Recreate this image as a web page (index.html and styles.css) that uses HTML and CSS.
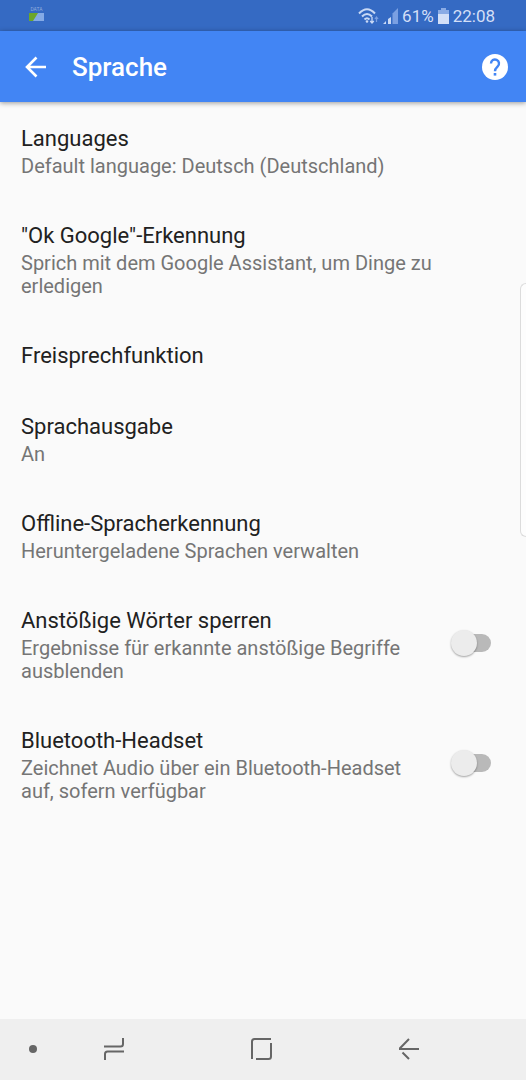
FILE: index.html
```
<!DOCTYPE html>
<html lang="de">
<head>
  <meta charset="UTF-8" />
  <meta name="viewport" content="width=device-width, initial-scale=1.0" />
  <title>Sprache</title>
  <link rel="stylesheet" href="styles.css">
</head>
<body>

  <div class="status-bar">
    <div class="data-badge">
      <span>DATA</span>
      <svg width="15" height="8" viewBox="0 0 15 8">
        <rect width="15" height="8" fill="#84aae6" />
        <path d="M0 0h9L4 8H0z" fill="#6ca62c" />
      </svg>
    </div>
    <div class="status-info">
      <svg width="21" height="18" viewBox="0 0 21 18" fill="none" stroke="#c9d9f5" stroke-width="2">
        <path d="M1 6.500Q9 -2 17 6.500M4 9.500Q9 4.500 14 9.500M6.500 12.500Q9 10 11.500 12.500" />
        <circle cx="9" cy="14.500" r="1.300" fill="#c9d9f5" stroke="none" />
        <path d="M14 10v6M12.200 14l1.800 2 1.800-2" stroke-width="1.300" />
        <path d="M18.500 15V10M16.900 12l1.600-2 1.600 2" stroke="#7ba0e2" stroke-width="1.200" />
      </svg>
      <svg width="15" height="16" viewBox="0 0 15 16">
        <path d="M0 16l3-3v3zM5 11l3-2v7H5z" fill="#c9d9f5" />
        <path d="M9.500 5.500L15 0v16H9.500z" fill="#7ba0e2" />
      </svg>
      <span>61%</span>
      <svg width="11" height="16" viewBox="0 0 11 16">
        <path d="M3 0h5v2h3v4H0V2h3z" fill="#8aabe5" />
        <path d="M0 6h11v10H0z" fill="#d3dff7" />
      </svg>
      <span>22:08</span>
    </div>
  </div>

  <header class="toolbar">
    <button type="button" aria-label="Zurück">
      <svg width="22" height="22" viewBox="0 0 22 22" fill="none" stroke="#fff" stroke-width="2.600">
        <path d="M21 11H2.500M11.500 1.500L2 11l9.500 9.500" />
      </svg>
    </button>
    <h1>Sprache</h1>
    <button type="button" aria-label="Hilfe">
      <svg width="26" height="26" viewBox="0 0 26 26">
        <circle cx="13" cy="13" r="13" fill="#fff" />
        <path d="M9 9.500a4 4 0 1 1 6.700 2.900C14.200 13.800 13 14.600 13 17.200" fill="none" stroke="#4285f4" stroke-width="2.400" />
        <rect x="11.700" y="19" width="2.600" height="2.600" fill="#4285f4" />
      </svg>
    </button>
  </header>

  <main class="settings">
    <a class="setting" href="#languages">
      <span class="title">Languages</span>
      <span class="desc">Default language: Deutsch (Deutschland)</span>
    </a>
    <a class="setting" href="#ok-google">
      <span class="title">"Ok Google"-Erkennung</span>
      <span class="desc">Sprich mit dem Google Assistant, um Dinge zu erledigen</span>
    </a>
    <a class="setting" href="#freisprechen">
      <span class="title">Freisprechfunktion</span>
    </a>
    <a class="setting" href="#sprachausgabe">
      <span class="title">Sprachausgabe</span>
      <span class="desc">An</span>
    </a>
    <a class="setting" href="#offline">
      <span class="title">Offline-Spracherkennung</span>
      <span class="desc">Heruntergeladene Sprachen verwalten</span>
    </a>
    <label class="setting with-switch" for="block-words">
      <span class="text">
        <span class="title">Anstößige Wörter sperren</span>
        <span class="desc">Ergebnisse für erkannte anstößige Begriffe ausblenden</span>
      </span>
      <input class="switch" type="checkbox" id="block-words" />
    </label>
    <label class="setting with-switch" for="bluetooth">
      <span class="text">
        <span class="title">Bluetooth-Headset</span>
        <span class="desc">Zeichnet Audio über ein Bluetooth-Headset auf, sofern verfügbar</span>
      </span>
      <input class="switch" type="checkbox" id="bluetooth" />
    </label>
  </main>

  <!-- Edge panel handle -->
  <div class="edge-handle"></div>

  <nav class="nav-bar">
    <button type="button" aria-label="Leiste ausblenden">
      <svg width="8" height="8" viewBox="0 0 8 8"><circle cx="4" cy="4" r="4" fill="#666" /></svg>
    </button>
    <div class="nav-keys">
      <button type="button" aria-label="Letzte Apps">
        <svg width="20" height="24" viewBox="0 0 20 24">
          <path d="M0 9.500h16.500q2.500 0 2.500-2.500V1M20 14.500H3.500Q1 14.500 1 17V23" />
        </svg>
      </button>
      <button type="button" aria-label="Startseite">
        <svg width="21" height="22" viewBox="0 0 21 22">
          <path d="M1 21V3.500Q1 1 3.500 1H20M20 5v13.500q0 2.500-2.500 2.500H5" />
        </svg>
      </button>
      <button type="button" aria-label="Zurück">
        <svg width="20" height="22" viewBox="0 0 20 22">
          <path d="M10 1L1 10.200V11H20M3.500 14.500L10 21" />
        </svg>
      </button>
    </div>
  </nav>

</body>
</html>
```
FILE: styles.css
```
* {
  margin: 0;
  padding: 0;
  box-sizing: border-box;
  font-family: Roboto, sans-serif;
}

body {
  min-height: 100vh;
  display: flex;
  flex-direction: column;
  background-color: #fafafa;
  color: #212121;
}

button {
  background: transparent;
  border: none;
  cursor: pointer;
}

svg {
  display: block;
}

.status-bar {
  height: 31px;
  padding: 0 31px 0 29px;
  display: flex;
  align-items: center;
  justify-content: space-between;
  background-color: #356ac3;
}

.data-badge {
  display: flex;
  flex-direction: column;
  align-items: center;
  margin-bottom: 4px;
}

.data-badge span {
  color: #8fabdc;
  font-size: 5px;
  line-height: 7px;
}

.status-info {
  display: flex;
  align-items: center;
  gap: 4px;
  color: #d3dff7;
  font-size: 17px;
}

/* Toolbar */
.toolbar {
  height: 71px;
  padding: 0 18px 0 25px;
  display: flex;
  align-items: center;
  background-color: #4285f4;
  color: #fff;
  box-shadow: 0 1px 5px rgba(0, 0, 0, 0.4);
}

.toolbar h1 {
  flex: 1;
  margin-left: 25px;
  font-size: 26px;
  font-weight: 500;
  line-height: 32px;
}

/* Settings */
.settings {
  flex: 1;
  padding-top: 1px;
}

.setting {
  display: block;
  padding: 22px 21px;
  color: inherit;
  text-decoration: none;
}

.title,
.desc {
  display: block;
}

.title {
  font-size: 22px;
  line-height: 27px;
}

.desc {
  margin-top: 3px;
  color: #757575;
  font-size: 20px;
  line-height: 23px;
}

.with-switch {
  display: flex;
  align-items: center;
  gap: 32px;
  padding-right: 35px;
}

.with-switch .text {
  flex: 1;
}

.switch {
  appearance: none;
  position: relative;
  width: 40px;
  height: 26px;
  margin-bottom: 4px;
  cursor: pointer;
}

.switch::before {
  content: '';
  position: absolute;
  inset: 4px 0 4px 4px;
  border-radius: 9px;
  background-color: #b9b9b9;
}

.switch::after {
  content: '';
  position: absolute;
  top: 0;
  left: 0;
  width: 26px;
  height: 26px;
  border-radius: 50%;
  background-color: #ececec;
  box-shadow: 0 1px 2px rgba(0, 0, 0, 0.35);
}

.switch:checked::before {
  background-color: #a1c2fa;
}

.switch:checked::after {
  left: 14px;
  background-color: #4285f4;
}

.edge-handle {
  position: fixed;
  top: 283px;
  right: 0;
  width: 6px;
  height: 254px;
  border: 1px solid #dcdcdc;
  border-right: none;
  border-radius: 6px 0 0 6px;
  background-color: #fdfdfd;
}

/* Navigation bar */
.nav-bar {
  height: 61px;
  padding: 0 107px 1px 29px;
  display: flex;
  align-items: center;
  background-color: #efefef;
}

.nav-keys {
  flex: 1;
  margin-left: 67px;
  display: flex;
  justify-content: space-between;
}

.nav-bar path {
  fill: none;
  stroke: #666;
  stroke-width: 2;
}
```
